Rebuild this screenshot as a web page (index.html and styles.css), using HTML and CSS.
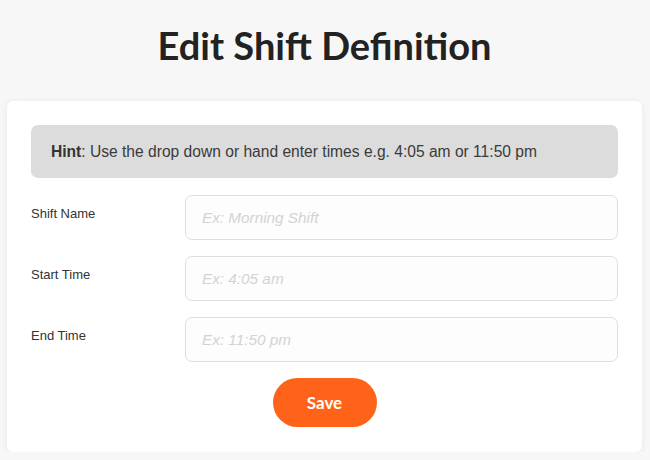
FILE: index.html
```html
<!DOCTYPE html>
<html>
<head>
<meta charset="utf-8">
<link rel="stylesheet" href="styles.css">
</head>
<body>
<h1 class="title">Edit Shift Definition</h1>
<div class="card">
  <div class="hint"><strong>Hint</strong>: Use the drop down or hand enter times e.g. 4:05 am or 11:50 pm</div>
  <div class="form">
    <label class="label">Shift Name</label>
    <input class="field" type="text" placeholder="Ex: Morning Shift">
    <label class="label">Start Time</label>
    <input class="field" type="text" placeholder="Ex: 4:05 am">
    <label class="label">End Time</label>
    <input class="field" type="text" placeholder="Ex: 11:50 pm">
  </div>
  <div class="actions">
    <button class="save" type="button">Save</button>
  </div>
</div>
</body>
</html>
```
FILE: styles.css
```css
html, body {
  margin: 0;
  padding: 0;
  background: #f7f7f7;
}
body {
  padding: 23px 8px 0 7px;
  font-family: "Liberation Sans", Arial, sans-serif;
  color: #333;
}
.title {
  margin: 0 0 34px;
  font-family: Lato, "Liberation Sans", sans-serif;
  font-weight: 700;
  font-size: 38px;
  line-height: 44px;
  text-align: center;
  color: #222;
}
.card {
  background: #fff;
  border-radius: 6px;
  box-shadow: 0 1px 6px rgba(0, 0, 0, 0.07);
  padding: 24px 24px 25px;
}
.hint {
  height: 53px;
  display: flex;
  align-items: center;
  padding-left: 20px;
  background: #dcdcdc;
  border-radius: 7px;
  font-size: 15.6px;
  color: #3a3a3a;
  margin-bottom: 17px;
}
.hint strong {
  font-weight: 700;
  color: #333;
}
.form {
  display: grid;
  grid-template-columns: 154px 1fr;
  row-gap: 16px;
}
.label {
  font-size: 13px;
  line-height: 16px;
  padding-top: 11px;
  color: #333;
}
.field {
  box-sizing: border-box;
  height: 45px;
  width: 100%;
  margin: 0;
  padding: 0 16px;
  border: 1px solid #dedede;
  border-radius: 7px;
  background: #fdfdfd;
  font-family: "Liberation Sans", Arial, sans-serif;
  font-size: 15.3px;
  color: #333;
  outline: none;
}
.field::placeholder {
  color: #d3d3d3;
  font-style: italic;
}
.actions {
  display: flex;
  justify-content: center;
  padding-top: 16px;
}
.save {
  width: 104px;
  height: 49px;
  border: none;
  border-radius: 25px;
  background: #ff6319;
  color: #fff;
  font-family: Lato, "Liberation Sans", sans-serif;
  font-weight: 700;
  font-size: 17px;
  cursor: pointer;
}
```
